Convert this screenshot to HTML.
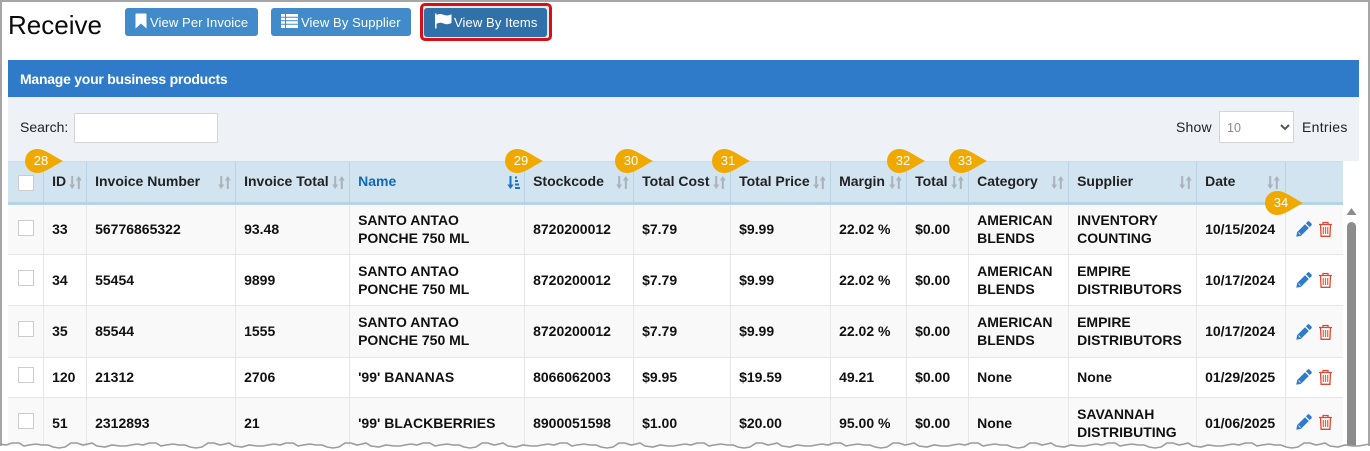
<!DOCTYPE html>
<html><head><meta charset="utf-8"><title>Receive</title>
<style>
html,body{margin:0;padding:0;background:#fff}
#p{position:relative;width:1370px;height:451px;overflow:hidden;background:#fff;font-family:"Liberation Sans",sans-serif;color:#111}
.abs{position:absolute}
.btn{position:absolute;top:8px;height:28px;background:#428bca;border-radius:3px;color:#fff;font-size:13px;line-height:29px;letter-spacing:.1px;white-space:nowrap}
.btn svg{position:absolute}
.btn span{position:absolute;top:0}
table{position:absolute;left:8px;top:161px;border-collapse:collapse;table-layout:fixed;width:1335px;font-size:14px;letter-spacing:0;font-weight:bold;line-height:18px}
th{background:#d2e4f0;height:41px;text-align:left;padding:0 0 3px 8.6px;border-left:1px solid #b9d3e5;border-top:1px solid #c9dcea;border-bottom:3px solid #b7d3e6;color:#222;font-size:14px;position:relative;box-sizing:border-box}
th:first-child{border-left:0}
td{padding:0 0 0 8.6px;border-left:1px solid #e6e6e6;border-bottom:1px solid #e6e6e6;vertical-align:middle;box-sizing:border-box;color:#111}
td:first-child{border-left:0}
tr.o td{background:#f9f9f9}
tr.e td{background:#fff}
tr.a td{padding-bottom:2px}
tr.d .ed{margin-top:-8px}
th svg.s{position:absolute;top:13px;width:13px;height:15px}
.cb{position:absolute;left:10px;width:16px;height:16px;background:#fff;border:1px solid #ccc;box-sizing:border-box}
td{position:relative}
.ed{position:absolute;left:10px;top:50%;margin-top:-9px}
.bd{position:absolute;width:40px;height:24px}
.bt{position:absolute;color:#fff;font-size:13px;line-height:24px;width:24px;text-align:center}
</style></head>
<body><div id="p">
<svg width="0" height="0" style="position:absolute">
<defs>
<symbol id="sort" viewBox="0 0 13 15"><path d="M3.200 1v10" stroke="#aab3b9" stroke-width="2" fill="none"/><path d="M.2 9.500h6L3.200 14z" fill="#aab3b9"/><path d="M9.800 14V4" stroke="#aab3b9" stroke-width="2" fill="none"/><path d="M6.800 5.500h6L9.800 1z" fill="#aab3b9"/></symbol>
<symbol id="tag" viewBox="0 0 40 24"><path d="M12 0C20 0 28 7 38 12 28 17 20 24 12 24A12 12 0 0 1 12 0z" fill="#f0a900"/></symbol>
<symbol id="pen" viewBox="0 0 16 16"><path d="M11.500 .7a1.500 1.500 0 0 1 2.100 0l1.700 1.700a1.500 1.500 0 0 1 0 2.100L13.700 6.100 9.900 2.300zM9 3.200l3.800 3.800-7.900 7.900L.3 15.700l.8-4.600z" fill="#2f7bc9"/><path d="M2.500 11.500l2 2" stroke="#cfe2f5" stroke-width="1"/></symbol>
<symbol id="bin" viewBox="0 0 15 16"><path d="M1 3.500h13M5 3.300V1.500h5v1.800M2.500 3.500l.6 11.800h8.800l.6-11.800" fill="none" stroke="#dd4a33" stroke-width="1.300"/><path d="M5.300 6v7M7.500 6v7M9.700 6v7" stroke="#e2683a" stroke-width="1.200"/></symbol>
<pattern id="tear" width="137" height="8" patternUnits="userSpaceOnUse"><path d="M0 3l6 1 6-2 7 0 5 3 5-1 7-1 6 1 6 0 5 2 6 1 6-1 6-4 6 0 6 2 5-1 4-1 5 3 8 1 7-2 8 1 6 0 5-1 6-1" fill="none" stroke="#9c9c9c" stroke-width="1.600"/></pattern>
</defs></svg>

<div class="abs" style="left:8px;top:9px;font-size:26px;line-height:32px;color:#0b0b0b">Receive</div>

<div class="btn" style="left:125px;width:133px"><svg style="left:10px;top:5px" width="12" height="16" viewBox="0 0 12 16"><path d="M.5 1.200Q.5 .5 1.200 .5h9.600q.7 0 .7.700V15.500L6 10.500.5 15.500z" fill="#fff"/></svg><span style="left:25px">View Per Invoice</span></div>
<div class="btn" style="left:271px;width:140px"><svg style="left:10px;top:6px" width="17" height="14" viewBox="0 0 17 14"><path d="M0 0h17v14H0z" fill="#fff"/><path d="M0 3.300h17M0 6.800h17M0 10.300h17M4.500 0v14" stroke="#428bca" stroke-width="1"/></svg><span style="left:30px">View By Supplier</span></div>
<div class="abs" style="left:420px;top:3px;width:132px;height:38px;box-sizing:border-box;border:3px solid #d90f17;border-radius:5px;background:#e9e9e9"></div>
<div class="btn" style="left:424px;top:8px;width:123px;height:29px;background:#3071a9;line-height:29px"><svg style="left:11px;top:5px" width="17" height="16" viewBox="0 0 17 16"><path d="M.8 .5v15" stroke="#fff" stroke-width="1.500"/><path d="M1.500 2C4 .5 6 .8 8.500 1.800s5 1 8-.5V10c-3 1.500-5.500 1.500-8 .5S4 9.500 1.500 11z" fill="#fff"/></svg><span style="left:30px">View By Items</span></div>

<div class="abs" style="left:8px;top:60px;width:1351px;height:38px;background:#2f7bc9;border-bottom:1px solid #e6ebf2;box-sizing:border-box"></div>
<div class="abs" style="left:20px;top:70px;color:#fff;font-weight:bold;font-size:14px;line-height:19px;letter-spacing:-.25px">Manage your business products</div>
<div class="abs" style="left:8px;top:98px;width:1351px;height:63px;background:#eef1f6"></div>
<div class="abs" style="left:20px;top:118px;font-size:14px;line-height:18px;letter-spacing:0;color:#222">Search:</div>
<div class="abs" style="left:74px;top:113px;width:144px;height:30px;background:#fff;border:1px solid #d5d5d5;box-sizing:border-box"></div>
<div class="abs" style="left:1176px;top:118px;font-size:14px;line-height:18px;letter-spacing:.2px;color:#222">Show</div>
<div class="abs" style="left:1219px;top:111px;width:75px;height:32px;background:#fff;border:1px solid #d5d5d5;box-sizing:border-box"></div>
<div class="abs" style="left:1227px;top:119px;font-size:12.500px;line-height:18px;color:#8a8a8a">10</div>
<svg class="abs" style="left:1280px;top:124px" width="10" height="7" viewBox="0 0 10 7"><path d="M1 1l4 4 4-4" fill="none" stroke="#555" stroke-width="2"/></svg>
<div class="abs" style="left:1302px;top:118px;font-size:14px;line-height:18px;letter-spacing:.3px;color:#222">Entries</div>

<div class="abs" style="left:0;top:0;width:1370px;height:446px;overflow:hidden">
<table>
<colgroup><col style="width:35px"><col style="width:43px"><col style="width:149px"><col style="width:114px"><col style="width:175px"><col style="width:109px"><col style="width:97px"><col style="width:100px"><col style="width:76px"><col style="width:62px"><col style="width:100px"><col style="width:128px"><col style="width:89px"><col style="width:58px"></colgroup>
<tr style="height:42px">
<th><div class="cb" style="top:13px"></div></th>
<th>ID<svg class="s" style="left:25px"><use href="#sort"/></svg></th>
<th>Invoice Number<svg class="s" style="left:131px"><use href="#sort"/></svg></th>
<th>Invoice Total<svg class="s" style="left:96px"><use href="#sort"/></svg></th>
<th style="color:#1368b8">Name<svg class="s" style="left:157px" viewBox="0 0 13 15"><path d="M3.500 1v10" stroke="#1a73c8" stroke-width="2"/><path d="M.3 9.500h6.400L3.500 14z" fill="#1a73c8"/><path d="M8 2.500h2M8 6h3M8 9.500h4M8 13h5" stroke="#1a73c8" stroke-width="2"/></svg></th>
<th>Stockcode<svg class="s" style="left:91px"><use href="#sort"/></svg></th>
<th>Total Cost<svg class="s" style="left:79px"><use href="#sort"/></svg></th>
<th>Total Price<svg class="s" style="left:82px"><use href="#sort"/></svg></th>
<th>Margin<svg class="s" style="left:58px"><use href="#sort"/></svg></th>
<th>Total<svg class="s" style="left:44px"><use href="#sort"/></svg></th>
<th>Category<svg class="s" style="left:82px"><use href="#sort"/></svg></th>
<th>Supplier<svg class="s" style="left:110px"><use href="#sort"/></svg></th>
<th>Date<svg class="s" style="left:70px"><use href="#sort"/></svg></th>
<th></th>
</tr>
<tr class="o a" style="height:51px"><td><div class="cb" style="top:15px"></div></td><td>33</td><td>56776865322</td><td>93.48</td><td>SANTO ANTAO<br>PONCHE 750 ML</td><td>8720200012</td><td>$7.79</td><td>$9.99</td><td>22.02 %</td><td>$0.00</td><td>AMERICAN<br>BLENDS</td><td>INVENTORY<br>COUNTING</td><td>10/15/2024</td><td><svg class="ed" width="16" height="16"><use href="#pen"/></svg><svg class="ed" style="left:32px" width="15" height="16"><use href="#bin"/></svg></td></tr>
<tr class="e d" style="height:51px"><td><div class="cb" style="top:15px"></div></td><td>34</td><td>55454</td><td>9899</td><td>SANTO ANTAO<br>PONCHE 750 ML</td><td>8720200012</td><td>$7.79</td><td>$9.99</td><td>22.02 %</td><td>$0.00</td><td>AMERICAN<br>BLENDS</td><td>EMPIRE<br>DISTRIBUTORS</td><td>10/17/2024</td><td><svg class="ed" width="16" height="16"><use href="#pen"/></svg><svg class="ed" style="left:32px" width="15" height="16"><use href="#bin"/></svg></td></tr>
<tr class="o a d" style="height:52px"><td><div class="cb" style="top:15px"></div></td><td>35</td><td>85544</td><td>1555</td><td>SANTO ANTAO<br>PONCHE 750 ML</td><td>8720200012</td><td>$7.79</td><td>$9.99</td><td>22.02 %</td><td>$0.00</td><td>AMERICAN<br>BLENDS</td><td>EMPIRE<br>DISTRIBUTORS</td><td>10/17/2024</td><td><svg class="ed" width="16" height="16"><use href="#pen"/></svg><svg class="ed" style="left:32px" width="15" height="16"><use href="#bin"/></svg></td></tr>
<tr class="e a" style="height:40px"><td><div class="cb" style="top:9px"></div></td><td>120</td><td>21312</td><td>2706</td><td>'99' BANANAS</td><td>8066062003</td><td>$9.95</td><td>$19.59</td><td>49.21</td><td>$0.00</td><td>None</td><td>None</td><td>01/29/2025</td><td><svg class="ed" width="16" height="16"><use href="#pen"/></svg><svg class="ed" style="left:32px" width="15" height="16"><use href="#bin"/></svg></td></tr>
<tr class="o" style="height:51px"><td><div class="cb" style="top:15px"></div></td><td>51</td><td>2312893</td><td>21</td><td>'99' BLACKBERRIES</td><td>8900051598</td><td>$1.00</td><td>$20.00</td><td>95.00 %</td><td>$0.00</td><td>None</td><td>SAVANNAH<br>DISTRIBUTING</td><td>01/06/2025</td><td><svg class="ed" width="16" height="16"><use href="#pen"/></svg><svg class="ed" style="left:32px" width="15" height="16"><use href="#bin"/></svg></td></tr>
</table>
<svg class="abs" style="left:1346px;top:208px" width="11" height="8" viewBox="0 0 11 8"><path d="M5.500 0l5 7H.5z" fill="#8c8c8c"/></svg>
<div class="abs" style="left:1347px;top:222px;width:9px;height:240px;background:#8c8c8c;border-radius:5px 5px 0 0"></div>
</div>

<svg class="bd" style="left:25px;top:149px"><use href="#tag"/></svg><div class="bt" style="left:29px;top:149px">28</div>
<svg class="bd" style="left:505px;top:149px"><use href="#tag"/></svg><div class="bt" style="left:509px;top:149px">29</div>
<svg class="bd" style="left:615px;top:149px"><use href="#tag"/></svg><div class="bt" style="left:619px;top:149px">30</div>
<svg class="bd" style="left:712px;top:149px"><use href="#tag"/></svg><div class="bt" style="left:716px;top:149px">31</div>
<svg class="bd" style="left:887px;top:149px"><use href="#tag"/></svg><div class="bt" style="left:891px;top:149px">32</div>
<svg class="bd" style="left:949px;top:149px"><use href="#tag"/></svg><div class="bt" style="left:953px;top:149px">33</div>
<svg class="bd" style="left:1265px;top:191px"><use href="#tag"/></svg><div class="bt" style="left:1269px;top:191px">34</div>

<div class="abs" style="left:0;top:0;width:1370px;height:2px;background:#a6a6a6"></div>
<div class="abs" style="left:0;top:0;width:2px;height:446px;background:#a6a6a6"></div>
<div class="abs" style="left:1368px;top:0;width:2px;height:446px;background:#a6a6a6"></div>
<div class="abs" style="left:0;top:446px;width:1370px;height:5px;background:#fff"></div>
<svg class="abs" style="left:0;top:441px" width="1370" height="8"><rect width="1370" height="8" fill="url(#tear)"/></svg>
</div></body></html>
